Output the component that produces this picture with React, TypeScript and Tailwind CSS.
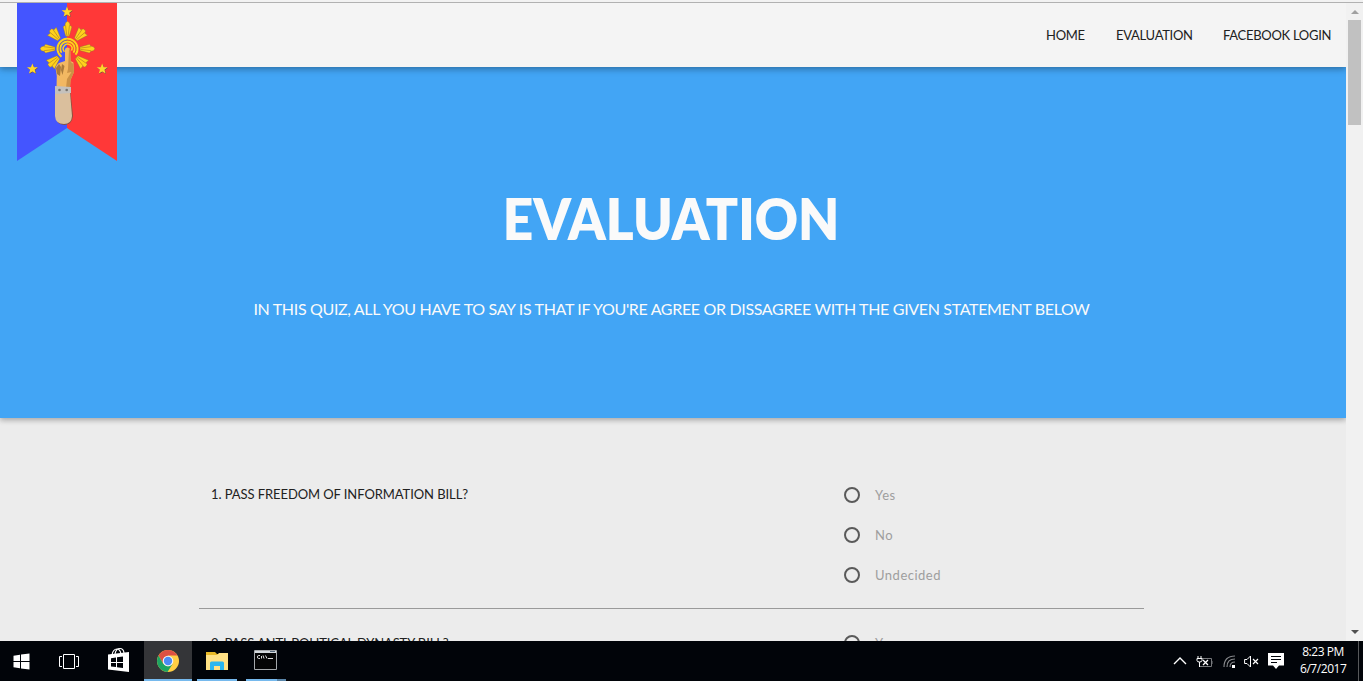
import React from "react";

const star = "M0 -5.6 L1.5 -1.8 L5.4 -1.7 L2.3 .8 L3.4 4.6 L0 2.4 L-3.4 4.6 L-2.3 .8 L-5.4 -1.7 L-1.5 -1.8 Z";

function Ray({ angle }: { angle: number }) {
  const d =
    angle % 90 === 0
      ? "M-1.8 -12.5 L-4.4 -22 L-2.6 -23.3 L-2 -26 L0 -27.4 L2 -26 L2.6 -23.3 L4.4 -22 L1.8 -12.5 Z"
      : "M-2 -12.5 L-6 -23.5 L-2.6 -23 L-1.6 -25.4 L1.6 -25.4 L2.6 -23 L6 -23.5 L2 -12.5 Z";
  return (
    <g transform={`rotate(${angle})`}>
      <path d={d} fill="#ffd21c" stroke="#8b6b35" strokeWidth=".4" />
      <path d="M-.7 -13 L-2 -23.5 M.7 -13 L2 -23.5" stroke="#a77c22" strokeWidth=".6" />
    </g>
  );
}

function Logo() {
  return (
    <svg width="100" height="158" viewBox="17 3 100 158" className="absolute top-0 left-[17px] z-20">
      <path d="M17 3H67V128L17 161Z" fill="#4455ff" />
      <path d="M67 3H117V161L67 128Z" fill="#ff3838" />
      <g transform="translate(67.5 48.7)">
        {[0, 42, 90, 133, 227, 270, 318].map((a) => (
          <Ray key={a} angle={a} />
        ))}
        <g fill="none" stroke="#ffd21c">
          <path d="M-6 8 A10 10 0 1 1 8 6" strokeWidth="2" />
          <path d="M-6 4 A7.2 7.2 0 1 1 6 4" strokeWidth="1.8" />
          <path d="M-3 3 A4.4 4.4 0 1 1 4 2" strokeWidth="1.5" />
        </g>
        <path d="M-7 5 A8.6 8.6 0 1 1 7 5" fill="none" stroke="#a77c22" strokeWidth=".6" />
      </g>
      {[[67, 12], [32.4, 69], [102.2, 69]].map(([x, y]) => (
        <g key={x}>
          <path d={star} transform={`translate(${x + 0.5} ${y + 0.5})`} fill="#6b4d48" />
          <path d={star} transform={`translate(${x} ${y})`} fill="#ffd62b" />
        </g>
      ))}
      <path d="M65 50 Q65 47.5 67.7 47.5 Q70 47.5 70.2 50 L70.6 61 L73.4 62.5 L74 72 L70.5 80 L70 88 H56.5 L56.8 76 L55.5 68 Q56 65 59 63 L65 61 Z" fill="#f2b862" />
      <path d="M59 64 L56 68 L57 74 L60 76 L61 67 Z M62 64 L61 70 L62.5 75 L64.5 66 Z" fill="#a97a3b" />
      <path d="M69 49 L70.2 50 L70.8 62 L73.4 64 L74 72 L70.5 80 L70 88 H66 L67 79 L71.5 72 L67 73 L68 69 Z" fill="#cb9146" />
      <path d="M56 93 L70.5 92 L73 116 Q72 124.5 64.5 125 Q56 124.5 55.5 116 Z" fill="#87513f" />
      <path d="M55 92 H70 L72 116 Q71.5 124 64 124 Q55.5 124 55 116 Z" fill="#dabf9d" />
      <path d="M55 86 L71 87 V93 L55 94 Z" fill="#c4c1bd" />
      <circle cx="59.5" cy="90" r="1.3" fill="#77736e" />
      <circle cx="66.7" cy="90" r="1.3" fill="#77736e" />
    </svg>
  );
}

function Options({ options }: { options: string[] }) {
  return (
    <div className="flex flex-col gap-4">
      {options.map((o) => (
        <label key={o} className="flex h-6 items-center">
          <span className="size-4 rounded-full border-2 border-[#5a5a5a]" />
          <span className="ml-[15px] pt-[2px] text-[13px] tracking-[0.5px] text-[#9e9e9e]">{o}</span>
        </label>
      ))}
    </div>
  );
}

function Taskbar() {
  return (
    <footer className="flex h-10 shrink-0 items-stretch bg-[#010409] text-white">
      <div className="flex w-[42px] items-center justify-center">
        <svg width="17" height="17" viewBox="0 0 17 17" fill="#fff">
          <path d="M.5 2.8 7 1.8V8H.5ZM8 1.6 16.5.4V8H8ZM.5 9H7V15.2L.5 14.2ZM8 9H16.5V16.6L8 15.4Z" />
        </svg>
      </div>
      <div className="flex w-[54px] items-center justify-center">
        <svg width="20" height="15" viewBox="0 0 20 15" fill="none" stroke="#fff">
          <path d="M4.5 .5H15.5V14.5H4.5ZM3 2.5H.5V12.5H3M17 2.5H19.5V12.5H17" />
        </svg>
      </div>
      <div className="flex w-12 items-start pt-[6px] pl-[11px]">
        <svg width="23" height="26" viewBox="0 0 23 26">
          <path d="M5 8Q6 2 10 2Q13 2 14 7M8 7Q9 1.5 13 1.5Q16.5 1.5 17 6" fill="none" stroke="#fff" strokeWidth="1.2" />
          <path d="M1 7.5 22 5V25L1 22.5Z" fill="#fff" />
          <path d="M4 11.2 9 10.5V15H4ZM10 10.3 16 9.5V15H10ZM4 16H9V20L4 19.4ZM10 16H16V21L10 20.2Z" fill="#010409" />
        </svg>
      </div>
      <div className="flex w-12 items-center justify-center border-b-2 border-[#76b9ed] bg-[#343538] pt-[1px]">
        <svg width="22" height="22" viewBox="0 0 22 22">
          <circle cx="11" cy="11" r="11" fill="#ffce44" />
          <path d="M1.5 5.5A11 11 0 0 1 20.5 5.5H11L6.2 13.8Z" fill="#dd5144" />
          <path d="M1.5 5.5A11 11 0 0 0 10.5 22L15.7 13.8 11 16.5 6.2 13.8Z" fill="#1da462" />
          <circle cx="11" cy="11" r="5.3" fill="#f5f5f5" />
          <circle cx="11" cy="11" r="4.2" fill="#4c8bf5" />
        </svg>
      </div>
      <div className="ml-[5px] flex w-10 items-center justify-center border-b-2 border-[#76b9ed] pt-[1px]">
        <svg width="22" height="20" viewBox="0 0 22 20">
          <path d="M0 1H9L11 3H21V8H0Z" fill="#e8b927" />
          <path d="M0 4H11L13 2H22V19H0Z" fill="#ffe184" />
          <path d="M4 19V12Q4 10.5 5.5 10.5H16.5Q18 10.5 18 12V19H14V15H8V19Z" fill="#29b6f0" />
        </svg>
      </div>
      <div className="ml-[9px] flex w-[31px] items-center justify-end border-b-2 border-[#76b9ed]">
        <svg width="23" height="20" viewBox="0 0 23 20">
          <path d="M.5 .5H22.5V19.5H.5Z" fill="#050505" stroke="#a5a8ab" />
          <path d="M1 1H22V3H1Z" fill="#d4d9dd" />
          <path d="M16 1.5H21" stroke="#54677a" />
          <path d="M6 5.5H4.5Q3.5 5.5 3.5 7T4.5 8.5H6M7.5 6V8.5M9 5.5 10 8.5M11.5 5.5 13 8.5M14 8.5H19" fill="none" stroke="#ddd" />
        </svg>
      </div>
      <div className="w-[9px] border-b-2 border-[#5a86aa]" />
      <div className="grow" />
      <div className="flex items-center pr-4">
        <svg width="14" height="8" viewBox="0 0 14 8" fill="none" stroke="#fff" strokeWidth="1.4">
          <path d="M1 7 7 1 13 7" />
        </svg>
        <svg width="17" height="13" viewBox="0 0 17 13" className="ml-[9px]" fill="none" stroke="#fff">
          <path d="M5 3.5H15.5V11.5H4" stroke="#77797c" />
          <path d="M16 6V9" stroke="#77797c" />
          <path d="M2 1V3M5 1V3M1 3.5H6V5.5Q6 7 3.5 7Q1 7 1 5.5ZM3.5 7V12" />
          <path d="M7 5 12 10M12 5 7 10" strokeWidth="1.3" />
        </svg>
        <svg width="13" height="13" viewBox="0 0 13 13" className="ml-[10px]" fill="none" stroke="#85878a" strokeWidth="1.2">
          <path d="M1 12Q1 1 12 1M4 12Q4 4 12 4M7 12Q7 7 12 7" />
          <path d="M9 10H12V13H9Z" fill="#fff" stroke="none" />
        </svg>
        <svg width="15" height="13" viewBox="0 0 15 13" className="ml-[8px]" fill="none" stroke="#fff">
          <path d="M.6 4.5H3L6.5 1V12L3 8.5H.6Z" />
          <path d="M9 4 14 9M14 4 9 9" strokeWidth="1.2" />
        </svg>
        <svg width="16" height="16" viewBox="0 0 16 16" className="ml-[9px]">
          <path d="M0 0H16V12.5H11L8 16 5 12.5H0Z" fill="#fff" />
          <path d="M3 3.5H13M3 6.5H13M3 9.5H9" stroke="#010409" />
        </svg>
      </div>
      <div className="w-[46px] pt-[2px] text-center font-['Open_Sans',sans-serif] text-[12px] leading-[17px] tracking-[-0.45px] whitespace-nowrap">
        <div>8:23 PM</div>
        <div>6/7/2017</div>
      </div>
      <div className="ml-[12px] w-[5px] border-l border-[#56585a]" />
    </footer>
  );
}

export default function App() {
  return (
    <div className="flex h-[681px] w-[1363px] flex-col overflow-hidden bg-[#ececec] font-['Lato',sans-serif]">
      <div className="h-[3px] shrink-0 border-b border-[#b1b1b1] bg-[#f2f2f2]" />
      <div className="flex h-[638px] shrink-0">
        <main className="relative flex w-[1346px] flex-col overflow-hidden">
          <Logo />
          <header className="z-10 flex h-16 shrink-0 items-center justify-end gap-[31px] bg-[#f4f4f4] pt-[2px] pr-[15px] text-[13px] tracking-[-0.29px] text-[#212121] shadow-[0_2px_5px_0_rgba(0,0,0,0.16),0_2px_8px_0_rgba(0,0,0,0.2)]">
            <a className="w-[39px] whitespace-nowrap">HOME</a>
            <a className="w-[76px] whitespace-nowrap">EVALUATION</a>
            <a className="w-[108px] whitespace-nowrap">FACEBOOK LOGIN</a>
          </header>
          <section className="flex h-[351px] shrink-0 flex-col items-center bg-[#42a5f5] pr-[3px] shadow-[0_2px_5px_0_rgba(0,0,0,0.16),0_2px_6px_0_rgba(0,0,0,0.16)]">
            <h1 className="mt-[117px] scale-x-[0.95] text-[56px] leading-[70px] font-extrabold text-[#fafafa]">EVALUATION</h1>
            <p className="mt-[43px] text-[16px] leading-6 tracking-[-0.335px] whitespace-nowrap text-[#fafafa]">
              IN THIS QUIZ, ALL YOU HAVE TO SAY IS THAT IF YOU'RE AGREE OR DISSAGREE WITH THE GIVEN STATEMENT BELOW
            </p>
          </section>
          <section className="ml-[199px] flex w-[945px] flex-col pt-[65px]">
            <div className="flex h-[126px] border-b border-[#9a9a9a] pl-3">
              <div className="-mt-px w-[633px] text-[13px] leading-6 tracking-[-0.08px] text-[#212121]">1. PASS FREEDOM OF INFORMATION BILL?</div>
              <Options options={["Yes", "No", "Undecided"]} />
            </div>
            <div className="flex pt-[22px] pl-3">
              <div className="w-[633px] text-[13px] leading-6 tracking-[-0.12px] text-[#212121]">2. PASS ANTI-POLITICAL DYNASTY BILL?</div>
              <Options options={["Yes"]} />
            </div>
          </section>
        </main>
        <aside className="flex w-[17px] flex-col items-center justify-between bg-[#f1f1f1] pt-[7px] pb-[7px]">
          <div className="flex flex-col items-center gap-[6px]">
            <svg width="8" height="4" viewBox="0 0 8 4"><path d="M0 4 4 0 8 4Z" fill="#a0a0a0" /></svg>
            <div className="h-[105px] w-[13px] bg-[#c1c1c1]" />
          </div>
          <svg width="8" height="4" viewBox="0 0 8 4"><path d="M0 0 4 4 8 0Z" fill="#505050" /></svg>
        </aside>
      </div>
      <Taskbar />
    </div>
  );
}
